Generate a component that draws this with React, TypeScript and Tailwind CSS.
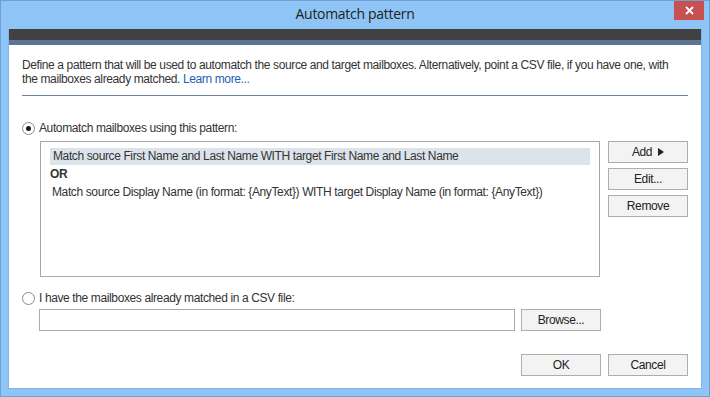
import type { ReactNode } from 'react'

const font = { fontFamily: '"Liberation Sans", Arial, sans-serif' }

interface ButtonProps {
  children: ReactNode
}

const DialogButton = ({ children }: ButtonProps) => (
  <button className="flex h-[22px] w-[80px] items-center justify-center gap-[6px] border border-[#adadad] bg-[#f3f3f3] text-[12px] leading-none tracking-[-0.38px] text-[#222]">
    {children}
  </button>
)

const Radio = ({ checked }: { checked?: boolean }) => (
  <span className="flex h-[13px] w-[13px] shrink-0 items-center justify-center rounded-full border border-[#8a8a8a] bg-white">
    {checked && <span className="h-[5px] w-[5px] rounded-full bg-[#1a1a1a]" />}
  </span>
)

const App = () => {
  return (
    <div
      className="flex h-[397px] w-[710px] flex-col border border-[#6f9fd3] bg-[#8ec5f6]"
      style={font}
    >
      {/* title bar */}
      <div className="grid h-[28px] grid-cols-[1fr_auto_1fr] items-start">
        <div />
        <div
          className="pt-[4px] text-[14px] leading-[18px] tracking-[-0.3px] text-[#222]"
          style={{ fontFamily: '"Open Sans", "Noto Sans", sans-serif' }}
        >
          Automatch pattern
        </div>
        <div className="flex justify-end pr-[5px]">
          <button className="flex h-[19px] w-[30px] items-center justify-center bg-[#c75050]">
            <svg width="9" height="9" viewBox="0 0 9 9">
              <path d="M1 1L8 8M8 1L1 8" stroke="white" strokeWidth="1.8" />
            </svg>
          </button>
        </div>
      </div>

      {/* client area */}
      <div className="mx-[7px] flex flex-1 flex-col border-l border-r border-b border-[#7fb6ec] bg-white">
        <div className="h-[11px] bg-[#414141]" />
        <div className="h-[5px] bg-[#5d7497]" />

        <div className="flex flex-1 flex-col px-[13px] text-[12px] leading-[13px] tracking-[-0.38px] text-[#333]">
          <p className="mt-[13px] leading-[14px]">
            Define a pattern that will be used to automatch the source and target mailboxes. Alternatively, point a CSV file, if you have one, with
            <br />
            the mailboxes already matched. <span className="text-[#2160b4]">Learn more...</span>
          </p>
          <div className="mt-[9px] h-px bg-[#6b7fa0]" />

          <label className="mt-[26px] flex items-center gap-[4px]">
            <Radio checked />
            <span>Automatch mailboxes using this pattern:</span>
          </label>

          <div className="mt-[6px] flex gap-[8px] pl-[18px]">
            <div className="flex h-[136px] w-[560px] flex-col gap-px border border-[#a7a7a7] px-[9px] pt-[6px]">
              <div className="flex h-[17px] items-center bg-[#dde3ea] pl-[3px]">
                Match source First Name and Last Name WITH target First Name and Last Name
              </div>
              <div className="flex h-[17px] items-center font-bold">OR</div>
              <div className="flex h-[17px] items-center pl-[2px]">
                Match source Display Name (in format: {'{AnyText}'}) WITH target Display Name (in format: {'{AnyText}'})
              </div>
            </div>
            <div className="flex flex-col gap-[5px]">
              <DialogButton>
                <span>Add</span>
                <svg width="6" height="8" viewBox="0 0 6 8">
                  <path d="M0 0L6 4L0 8Z" fill="#222" />
                </svg>
              </DialogButton>
              <DialogButton>Edit...</DialogButton>
              <DialogButton>Remove</DialogButton>
            </div>
          </div>

          <label className="mt-[15px] flex items-center gap-[4px]">
            <Radio />
            <span>I have the mailboxes already matched in a CSV file:</span>
          </label>

          <div className="mt-[4px] flex items-center gap-[6px] pl-[17px]">
            <div className="h-[22px] w-[476px] border border-[#ababab] bg-white" />
            <DialogButton>Browse...</DialogButton>
          </div>

          <div className="mt-[23px] flex justify-end gap-[7px]">
            <DialogButton>OK</DialogButton>
            <DialogButton>Cancel</DialogButton>
          </div>
        </div>
      </div>
      <div className="h-[7px]" />
    </div>
  )
}

export default App
